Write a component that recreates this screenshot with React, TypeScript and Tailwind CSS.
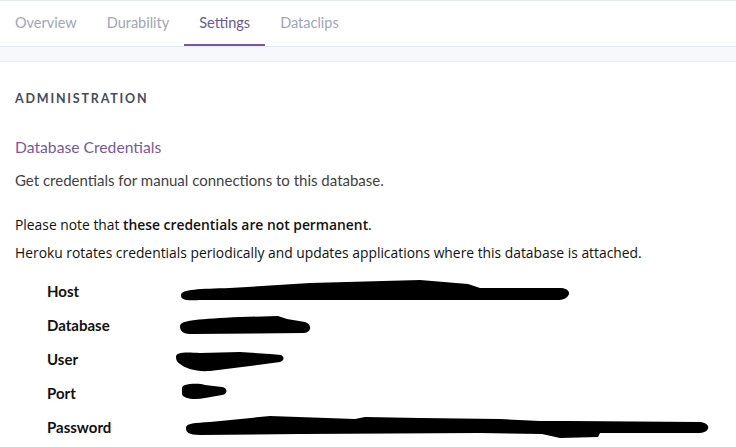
const tabs = ["Overview", "Durability", "Settings", "Dataclips"];

// redaction scribbles, drawn in page coordinates (viewBox follows the row)
const rows = [
    {
        label: "Host",
        top: 274,
        d: "M181,295 C181,289 200,289 230,288 L310,283 L420,280 L468,284 L480,288 L560,288 C572,288 572,298 560,300 L440,300 L300,300 L200,300 C183,301 181,299 181,295 Z",
    },
    {
        label: "Database",
        top: 308,
        d: "M180,326 C180,320 200,319 240,317 L278,316 L287,319 L305,322 C312,324 312,332 304,333 L190,334 C182,334 180,330 180,326 Z",
    },
    {
        label: "User",
        top: 342,
        d: "M176,357 C176,352 185,352 200,353 L240,352 L270,354 L281,355 C285,357 284,361 280,362 L250,366 L210,371 C195,372 185,368 180,364 C177,362 176,360 176,357 Z",
    },
    {
        label: "Port",
        top: 376,
        d: "M182,388 C182,383 200,383 205,385 L222,387 C228,388 228,394 222,395 L205,398 C195,400 183,399 182,394 Z",
    },
    {
        label: "Password",
        top: 410,
        d: "M186,428 C186,423 195,423 210,422 L270,416 L355,419 L365,417 L420,418 L500,419 L540,421 L570,421 L700,422 C711,423 711,432 700,433 L600,433 L598,437 L560,438 L542,434 L480,433 L300,434 L200,435 C188,435 186,432 186,428 Z",
    },
];

export default function App() {
    return (
        <div className="w-[736px] h-[447px] overflow-hidden bg-white font-['Lato',sans-serif]">
            <nav className="flex h-[46px] border-t border-[#e3e7ee]">
                {tabs.map((tab) => (
                    <div
                        key={tab}
                        className={
                            tab === "Settings"
                                ? "flex items-center px-[15px] text-[14.5px] text-[#6a5a96] border-b-2 border-[#79589f]"
                                : "flex items-center px-[15px] text-[14.5px] text-[#9ea5ba] border-b-2 border-transparent"
                        }
                    >
                        {tab}
                    </div>
                ))}
            </nav>

            <div className="h-[16px] border-y border-[#e6e9ef] bg-[#f7f8fb]" />

            <section className="px-[15px]">
                <h2 className="mt-[29px] text-[12.5px] leading-[16px] font-bold tracking-[1.8px] text-[#464b5e]">
                    ADMINISTRATION
                </h2>

                <h3 className="mt-[30px] text-[15.7px] leading-[20px] text-[#79589f]">
                    Database Credentials
                </h3>

                <p className="mt-[13px] text-[15px] leading-[20px] text-[#3f3f44]">
                    Get credentials for manual connections to this database.
                </p>

                <div className="font-['Open_Sans',sans-serif] text-[13.85px] leading-[20px] text-[#111]">
                    <p className="mt-[25px]">
                        Please note that <span className="font-semibold">these credentials are not permanent</span>.
                    </p>
                    <p className="mt-[8px]">
                        Heroku rotates credentials periodically and updates applications where this database is attached.
                    </p>
                </div>
            </section>

            <div className="mt-[11px]">
                {rows.map((row) => (
                    <div key={row.label} className="flex h-[34px] items-center">
                        <div className="w-[170px] pl-[47px] text-[15px] font-bold text-[#111]">
                            {row.label}
                        </div>
                        <svg
                            width="566"
                            height="34"
                            viewBox={`170 ${row.top} 566 34`}
                            className="shrink-0"
                        >
                            <path d={row.d} fill="#000" />
                        </svg>
                    </div>
                ))}
            </div>
        </div>
    );
}
